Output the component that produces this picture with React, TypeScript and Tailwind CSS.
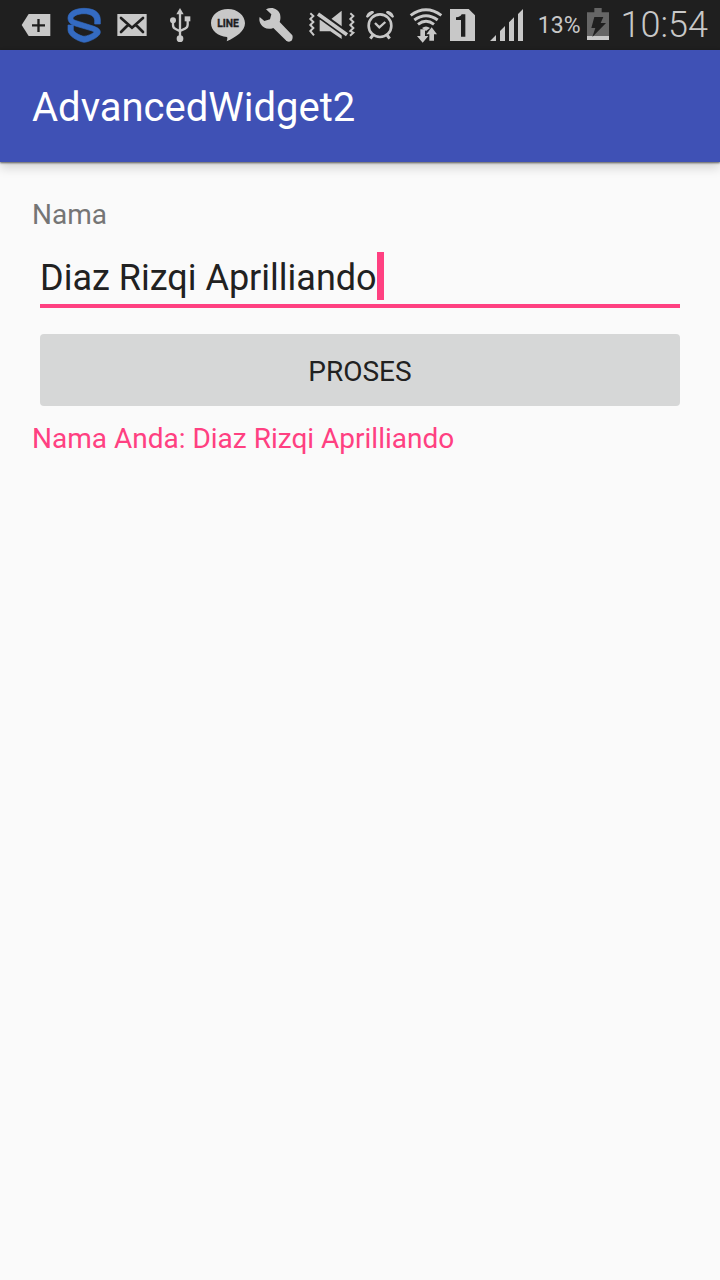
import { useState, type FormEvent, type ReactNode } from "react";

type IconProps = { box: string; className: string; label: string; children: ReactNode };

function StatusIcon({ box, className, label, children }: IconProps) {
  return (
    <svg viewBox={box} className={`h-[50px] shrink-0 ${className}`} fill="#c8c8c8" role="img" aria-label={label}>
      {children}
    </svg>
  );
}

function StatusBar() {
  return (
    <header className="flex h-[50px] items-center bg-[#1f1f1f] px-3 text-[#c8c8c8]">
      <StatusIcon box="36 0 144 150" className="w-12" label="More notifications">
        <path d="M65 75 86 42H151V108H86Z" />
        <path d="M96 76H135M115.500 57V96" stroke="#1f1f1f" strokeWidth="7" />
      </StatusIcon>
      <StatusIcon box="180 0 144 150" className="w-12" label="Security">
        <path
          d="M301 72H284V62C284 48 270 41 252 41C234 41 219 48 219 55C219 59 225 61 238 65L282 79C296 84 301 90 301 97C301 110 268 126 252 127C234 124 204 108 204 90V75H220V88C220 97 240 107 252 109C262 108 276 102 281 98C283 95 280 94 270 91L226 78C211 73 204 65 204 54C204 36 226 25 252 25C280 25 301 36 301 60Z"
          fill="#346bc2"
          stroke="#346bc2"
          strokeWidth="2"
        />
      </StatusIcon>
      <StatusIcon box="324 0 144 150" className="w-12" label="Mail">
        <path d="M352 42H440V108H352Z" />
        <path d="M363 54 396 83 429 54M363 96 384 75M429 96 408 75" fill="none" stroke="#1f1f1f" strokeWidth="8" strokeLinecap="round" />
      </StatusIcon>
      <StatusIcon box="18 0 144 150" className="w-12" label="USB">
        <path d="M90 24 101 43H79Z" />
        <circle cx="90" cy="116" r="10" />
        <circle cx="69" cy="61" r="9" />
        <path d="M104 49H121V64H104Z" />
        <path d="M90 40V112M69 64V75Q69 84 77 87L90 94M113 62V74Q113 82 105 86L90 93" fill="none" stroke="#c8c8c8" strokeWidth="7" />
      </StatusIcon>
      <StatusIcon box="162 0 144 150" className="w-12" label="LINE">
        <path d="M234 27C262 27 285 46 285 70C285 93 258 112 230 124C232 118 233 114 231 111C203 109 183 92 183 69C183 45 206 27 234 27Z" />
        <text x="234" y="81" textAnchor="middle" fill="#1f1f1f" stroke="#1f1f1f" strokeWidth="1" fontSize="31" fontWeight="700" fontFamily="Roboto, sans-serif">
          LINE
        </text>
      </StatusIcon>
      <StatusIcon box="306 0 144 150" className="w-12" label="Tools">
        <path d="M348 28C366 19 384 27 390 42C392 51 392 58 389 66L427 106C431 116 420 128 409 122L370 84C355 90 339 85 332 72C328 65 327 58 329 51L343 63L360 58L364 43Z" />
        <circle cx="417" cy="115" r="10" />
      </StatusIcon>
      <StatusIcon box="0 0 180 150" className="w-[60px]" label="Vibrate">
        <path d="M59 59H91L125 32V117L91 94H59Z" />
        <path d="M48 37 146 107" stroke="#1f1f1f" strokeWidth="22" />
        <path d="M54 42 141 104" stroke="#c8c8c8" strokeWidth="11" />
        <path
          d="M31 40 40 48 31 57 40 66 31 75 40 84 31 93 42 106M151 40 160 48 151 57 160 66 151 75 160 84 151 93 160 98 150 107"
          fill="none"
          stroke="#c8c8c8"
          strokeWidth="6"
        />
      </StatusIcon>
      <StatusIcon box="180 0 120 150" className="w-10" label="Alarm">
        <circle cx="240" cy="77" r="34" fill="none" stroke="#c8c8c8" strokeWidth="8" />
        <path d="M225 69 238 82 256 66" fill="none" stroke="#c8c8c8" strokeWidth="7" />
        <path d="M219 105 211 116M261 105 269 116" stroke="#c8c8c8" strokeWidth="9" />
        <path d="M198 51C200 40 209 32 220 33L222 38 203 53ZM282 51C280 40 271 32 260 33L258 38 277 53Z" />
      </StatusIcon>
      <StatusIcon box="300 0 150 150" className="w-[50px]" label="Wi-Fi">
        <path d="M332 46Q378 12 424 46M343 60Q378 34 413 60M354 73Q378 55 402 73" fill="none" stroke="#c8c8c8" strokeWidth="9" />
        <path d="M366 84Q378 75 390 84L378 93Z" />
        <path d="M361 88H375V108H385L368 128 351 108H361ZM395 82 411 103H402V122H388V103H379Z" />
      </StatusIcon>
      <StatusIcon box="30 0 102 150" className="w-[34px]" label="SIM 1">
        <path d="M30 27H86L105 46V123H30Z" />
        <path d="M63 110V60H48V52Q62 51 65 43H76V110Z" fill="#1f1f1f" />
      </StatusIcon>
      <StatusIcon box="132 0 138 150" className="w-[46px]" label="Signal strength">
        <path d="M150 123 168 105V123ZM180 93 195 78V123H180ZM207 67 222 52V123H207ZM234 42 249 27V123H234Z" />
      </StatusIcon>
      <div className="ml-auto flex items-center gap-1">
        <span className="pt-0.5 text-[23px] leading-[48px]">13%</span>
        <StatusIcon box="42 0 78 150" className="w-[26px]" label="Battery charging">
          <path d="M48 37H70V24H92V37H114V108H48Z" fill="#666666" />
          <path d="M48 108H114V120H48Z" />
          <path d="M70 51H97L89 69H105L64 111 73 84H61Z" fill="#1f1f1f" />
        </StatusIcon>
        <time className="ml-1.5 text-[36px] font-light leading-[50px]">10:54</time>
      </div>
    </header>
  );
}

export default function App() {
  const [name, setName] = useState("Diaz Rizqi Aprilliando");
  const [result, setResult] = useState("Diaz Rizqi Aprilliando");

  const submit = (event: FormEvent) => {
    event.preventDefault();
    setResult(name);
  };

  return (
    <div className="min-h-screen bg-[#fafafa] font-['Roboto',sans-serif]">
      <StatusBar />
      <div className="flex h-28 items-center bg-[#3f51b5] px-8 pt-1 shadow-[0_1px_2px_rgba(0,0,0,0.6),0_6px_10px_rgba(0,0,0,0.15)]">
        <h1 className="text-[40px] leading-[48px] text-white">AdvancedWidget2</h1>
      </div>
      <main className="px-8 pt-[34px]">
        <form onSubmit={submit}>
          <label htmlFor="name" className="block text-[28px] leading-[38px] text-[#757575]">
            Nama
          </label>
          <div className="mx-2 mt-[18px] flex h-14 items-start overflow-hidden border-b-4 border-[#ff4081]">
            <input
              id="name"
              type="text"
              value={name}
              onChange={(event) => setName(event.target.value)}
              className="h-[52px] max-w-full bg-transparent text-[36px] text-[#212121] caret-transparent outline-none [field-sizing:content]"
            />
            <span className="h-12 w-[7px] shrink-0 bg-[#ff4081]" />
          </div>
          <div className="mx-2 mt-[26px] flex">
            <button type="submit" className="h-[72px] grow rounded-[4px] bg-[#d6d7d7] pt-1 text-[28px] text-[#212121]">
              PROSES
            </button>
          </div>
        </form>
        <output htmlFor="name" className="mt-[14px] block text-[28px] leading-[38px] text-[#ff4081]">
          Nama Anda: {result}
        </output>
      </main>
    </div>
  );
}
